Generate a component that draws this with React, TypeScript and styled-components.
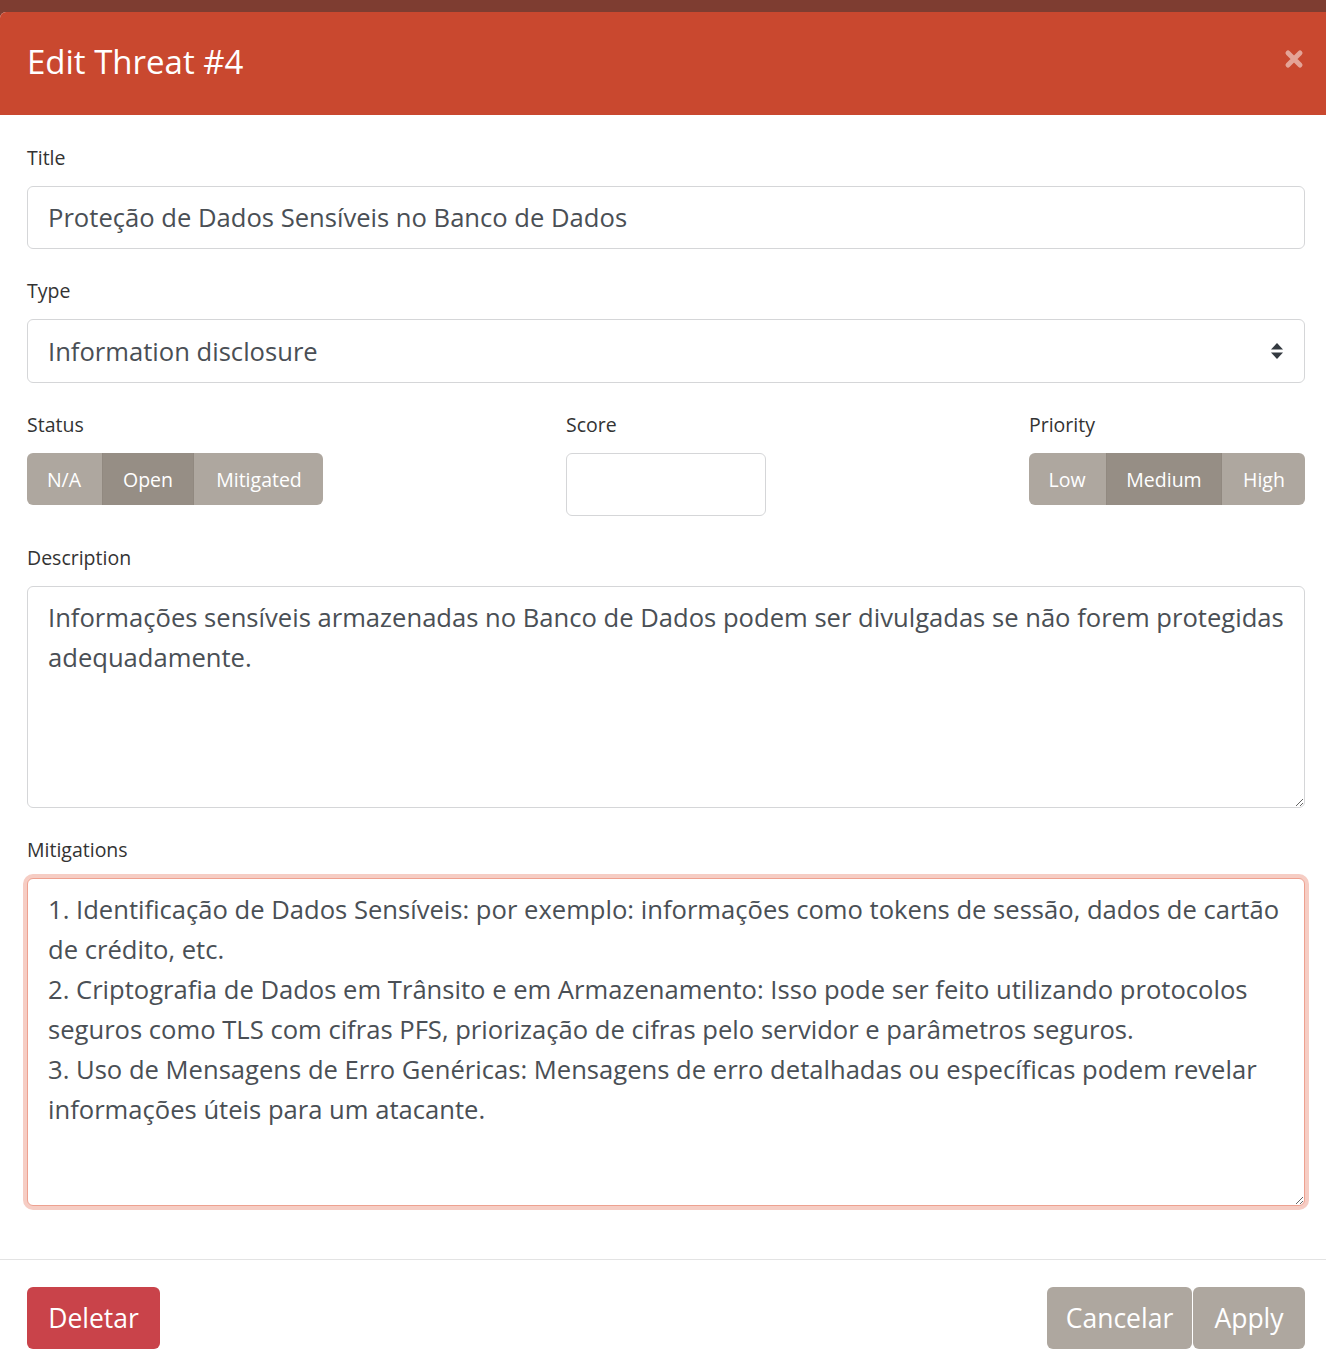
import React, { useEffect, useRef } from "react";
import styled, { createGlobalStyle } from "styled-components";

const FONT = `"Open Sans", "Noto Sans", "Liberation Sans", sans-serif`;

const GlobalStyle = createGlobalStyle`
  html, body { margin: 0; padding: 0; }
  body {
    background: #7e3d31;
    font-family: ${FONT};
    -webkit-font-smoothing: antialiased;
  }
  * { box-sizing: border-box; }
`;

const Backdrop = styled.div`
  padding-top: 12px;
  min-height: 100vh;
`;

const Modal = styled.div`
  background: #ffffff;
  border-top-left-radius: 6px;
  overflow: hidden;
  min-height: 1358px;
  display: flex;
  flex-direction: column;
`;

const Header = styled.div`
  height: 103px;
  background: #c9482f;
  display: flex;
  align-items: center;
  justify-content: space-between;
  padding: 0 22px 4px 27px;
`;

const Title = styled.h4`
  margin: 0;
  color: #ffffff;
  font-size: 33px;
  font-weight: 400;
  letter-spacing: 0;
`;

const CloseButton = styled.button`
  border: 0;
  background: transparent;
  padding: 0;
  width: 20px;
  height: 20px;
  display: flex;
  align-items: center;
  justify-content: center;
  cursor: pointer;
  margin-top: -6px;
`;

const Body = styled.div`
  padding: 29px 21px 25px 27px;
`;

const Group = styled.div`
  margin-bottom: 28px;
`;

const Label = styled.label`
  display: block;
  color: #333333;
  font-size: 19.5px;
  line-height: 28px;
  margin-bottom: 14px;
`;

const controlBase = `
  width: 100%;
  border: 1px solid #d5d6d8;
  border-radius: 6px;
  background: #ffffff;
  color: #4a4f55;
  font-family: ${FONT};
  font-size: 25.6px;
  outline: none;
`;

const TextInput = styled.input<{ $width?: string }>`
  ${controlBase}
  display: block;
  width: ${(p) => p.$width ?? "100%"};
  height: 63px;
  padding: 0 20px;
`;

const SelectWrap = styled.div`
  position: relative;
`;

const Select = styled.select`
  ${controlBase}
  display: block;
  height: 64px;
  padding: 0 48px 0 20px;
  appearance: none;
  -webkit-appearance: none;
`;

const SelectArrow = styled.svg`
  position: absolute;
  right: 21px;
  top: 50%;
  transform: translateY(-50%);
  pointer-events: none;
`;

const TextArea = styled.textarea<{ $height: number; $focused?: boolean }>`
  ${controlBase}
  display: block;
  height: ${(p) => p.$height}px;
  padding: 11px 12px 11px 20px;
  line-height: 40px;
  resize: vertical;
  border-color: ${(p) => (p.$focused ? "#eea190" : "#d5d6d8")};
  box-shadow: ${(p) => (p.$focused ? "0 0 0 4px #f6cdc4" : "none")};
  &:focus {
    border-color: #eea190;
    box-shadow: 0 0 0 4px #f6cdc4;
  }
`;

const Row = styled.div`
  display: grid;
  grid-template-columns: 539px 1fr auto;
  margin-bottom: 28px;
`;

const Column = styled.div`
  display: flex;
  flex-direction: column;
  align-items: flex-start;
`;

const ButtonGroup = styled.div`
  display: inline-flex;
  border-radius: 6px;
  overflow: hidden;
`;

const ToggleButton = styled.button<{ $active?: boolean; $w: number }>`
  width: ${(p) => p.$w}px;
  height: 52px;
  border: 0;
  border-left: 1px solid ${(p) => (p.$active ? "#918980" : "transparent")};
  border-right: 1px solid ${(p) => (p.$active ? "#918980" : "transparent")};
  background: ${(p) => (p.$active ? "#968e85" : "#aea79f")};
  color: #ffffff;
  font-family: ${FONT};
  font-size: 19.5px;
  padding: 0;
  cursor: pointer;
  &:first-child { border-left: 0; }
  &:last-child { border-right: 0; }
`;

const Footer = styled.div`
  margin-top: auto;
  border-top: 1px solid #e3e3e3;
  padding: 27px 21px 21px 27px;
  display: flex;
  justify-content: space-between;
  align-items: center;
`;

const FooterRight = styled.div`
  display: flex;
  gap: 1px;
`;

const ActionButton = styled.button<{ $variant: "danger" | "secondary"; $w: number }>`
  width: ${(p) => p.$w}px;
  height: 62px;
  border: 0;
  border-radius: 6px;
  background: ${(p) => (p.$variant === "danger" ? "#c9434a" : "#aea79f")};
  color: #ffffff;
  font-family: ${FONT};
  font-size: 26.5px;
  padding: 0;
  cursor: pointer;
`;

const description =
  "Informações sensíveis armazenadas no Banco de Dados podem ser divulgadas se não forem protegidas adequadamente.";

const mitigations =
  "1. Identificação de Dados Sensíveis: por exemplo: informações como tokens de sessão, dados de cartão de crédito, etc.\n" +
  "2. Criptografia de Dados em Trânsito e em Armazenamento: Isso pode ser feito utilizando protocolos seguros como TLS com cifras PFS, priorização de cifras pelo servidor e parâmetros seguros.\n" +
  "3. Uso de Mensagens de Erro Genéricas: Mensagens de erro detalhadas ou específicas podem revelar informações úteis para um atacante.";

export default function App() {
  const mitRef = useRef<HTMLTextAreaElement>(null);

  useEffect(() => {
    const el = mitRef.current;
    if (el) {
      el.focus();
      const pos = mitigations.indexOf("etc.") + 4;
      el.setSelectionRange(pos, pos);
    }
  }, []);

  return (
    <>
      <GlobalStyle />
      <Backdrop>
        <Modal>
          <Header>
            <Title>Edit Threat #4</Title>
            <CloseButton aria-label="Close">
              <svg width="20" height="20" viewBox="0 0 20 20">
                <path
                  d="M4 4 L16 16 M16 4 L4 16"
                  stroke="rgba(255,255,255,0.5)"
                  strokeWidth="5"
                  strokeLinecap="round"
                />
              </svg>
            </CloseButton>
          </Header>
          <Body>
            <Group>
              <Label>Title</Label>
              <TextInput
                type="text"
                defaultValue="Proteção de Dados Sensíveis no Banco de Dados"
              />
            </Group>
            <Group>
              <Label>Type</Label>
              <SelectWrap>
                <Select defaultValue="Information disclosure">
                  <option>Spoofing</option>
                  <option>Tampering</option>
                  <option>Repudiation</option>
                  <option>Information disclosure</option>
                  <option>Denial of service</option>
                  <option>Elevation of privilege</option>
                </Select>
                <SelectArrow width="14" height="18" viewBox="0 0 14 18">
                  <path d="M7 1 L13 7.5 H1 Z" fill="#343a40" />
                  <path d="M1 10.5 H13 L7 17 Z" fill="#343a40" />
                </SelectArrow>
              </SelectWrap>
            </Group>
            <Row>
              <Column>
                <Label>Status</Label>
                <ButtonGroup>
                  <ToggleButton $w={75}>N/A</ToggleButton>
                  <ToggleButton $w={92} $active>
                    Open
                  </ToggleButton>
                  <ToggleButton $w={129}>Mitigated</ToggleButton>
                </ButtonGroup>
              </Column>
              <Column>
                <Label>Score</Label>
                <TextInput type="text" $width="200px" defaultValue="" />
              </Column>
              <Column>
                <Label>Priority</Label>
                <ButtonGroup>
                  <ToggleButton $w={77}>Low</ToggleButton>
                  <ToggleButton $w={116} $active>
                    Medium
                  </ToggleButton>
                  <ToggleButton $w={83}>High</ToggleButton>
                </ButtonGroup>
              </Column>
            </Row>
            <Group>
              <Label>Description</Label>
              <TextArea $height={222} defaultValue={description} />
            </Group>
            <Group>
              <Label>Mitigations</Label>
              <TextArea
                ref={mitRef}
                $height={328}
                $focused
                defaultValue={mitigations}
              />
            </Group>
          </Body>
          <Footer>
            <ActionButton $variant="danger" $w={133}>
              Deletar
            </ActionButton>
            <FooterRight>
              <ActionButton $variant="secondary" $w={145}>
                Cancelar
              </ActionButton>
              <ActionButton $variant="secondary" $w={112}>
                Apply
              </ActionButton>
            </FooterRight>
          </Footer>
        </Modal>
      </Backdrop>
    </>
  );
}
